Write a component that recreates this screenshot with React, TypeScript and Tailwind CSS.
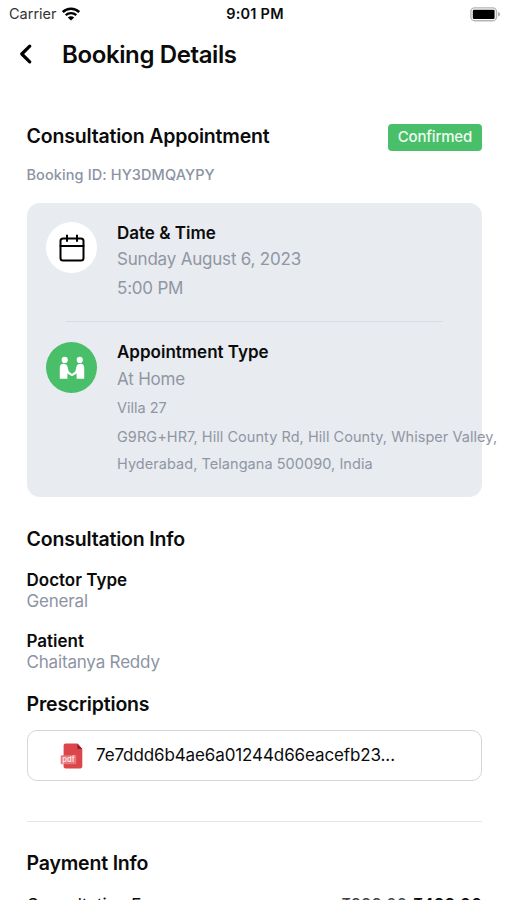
import type { ReactNode } from "react";

function WifiIcon() {
  return (
    <svg width="18" height="14" viewBox="0 0 18 14" fill="none" stroke="#000">
      <path d="M.8 5C5.300.5 12.700.5 17.200 5" strokeWidth="2.500" />
      <path d="M3.700 8.200c3-2.800 7.600-2.800 10.600 0" strokeWidth="2.300" />
      <path d="M9 13.600 5.800 10.400c1.800-1.600 4.600-1.600 6.400 0Z" fill="#000" stroke="none" />
    </svg>
  );
}

function BatteryIcon() {
  return (
    <svg width="31" height="15" viewBox="0 0 31 15">
      <rect x="0.900" y="0.900" width="25.600" height="12.800" rx="3.800" fill="#fff" stroke="#b5b5b5" strokeWidth="1.400" />
      <rect x="2.800" y="2.700" width="21.800" height="9.200" rx="1.200" fill="#000" />
      <path d="M28 5v4.600c1.700-.5 2.200-1.400 2.200-2.300S29.700 5.500 28 5Z" fill="#b5b5b5" />
    </svg>
  );
}

function CalendarIcon() {
  return (
    <svg width="26" height="28" viewBox="0 0 26 28" fill="none" stroke="#000" strokeWidth="2" strokeLinecap="round" strokeLinejoin="round">
      <rect x="1.500" y="4.500" width="23" height="22" rx="2.500" />
      <path d="M1.500 12h23M8 1.500v5.500M18 1.500v5.500" />
    </svg>
  );
}

function PeopleIcon() {
  return (
    <svg width="26" height="24" viewBox="0 0 26 24" fill="#fff">
      <circle cx="5.700" cy="3.900" r="3.100" />
      <circle cx="20.800" cy="3.900" r="3.100" />
      <path d="M.800 22.800V11.300c0-2.300 1.500-3.500 3.600-3.500 2.300 0 3.700 1 4.300 3.400l.900 4 3.400 2.800 3.400-2.800.9-4c.6-2.400 2-3.400 4.300-3.400 2.100 0 3.600 1.200 3.600 3.500v11.500h-7.600v-5.300l-3.200 2.100c-.9.600-1.900.6-2.800 0l-3.200-2.100v5.300Z" />
    </svg>
  );
}

function PdfIcon() {
  return (
    <svg width="24" height="26" viewBox="0 0 24 26">
      <path d="M5.500.5h11.800l5 5.600v17.500c0 1-.8 1.900-1.900 1.900H5.500c-1.100 0-1.900-.9-1.900-1.900V2.400C3.600 1.400 4.400.5 5.500.5Z" fill="#db464b" />
      <path d="M17.300.5l5 5.600h-3.700c-.8 0-1.300-.5-1.300-1.300Z" fill="#8f1f2b" />
      <rect x="0.700" y="12.200" width="15.600" height="9" rx="1.200" fill="#ea767b" />
      <text x="8.500" y="18.900" textAnchor="middle" fontSize="7.500" fontWeight="600" fill="#fbe6e7" fontFamily="Inter, sans-serif">
        pdf
      </text>
    </svg>
  );
}

type InfoFieldProps = {
  label: string;
  value: string;
};

function InfoField({ label, value }: InfoFieldProps) {
  return (
    <div className="text-[17px] leading-[21px]">
      <p className="font-semibold">{label}</p>
      <p className="tracking-[-0.18px] text-[#8c93a3]">{value}</p>
    </div>
  );
}

function SectionTitle({ children }: { children: ReactNode }) {
  return <h2 className="text-[19.500px] leading-6 font-semibold tracking-[-0.18px]">{children}</h2>;
}

export default function App() {
  return (
    <div className="h-[900px] w-full overflow-hidden bg-white font-['Inter',sans-serif] whitespace-nowrap text-[#0b0b0c]">
      <div className="grid h-7 grid-cols-3 items-center pr-[6px] pl-[9px] text-[14.500px]">
        <div className="flex items-center gap-[5px]">
          <span className="text-[#333]">Carrier</span>
          <WifiIcon />
        </div>
        <span className="text-center font-semibold tracking-[0.25px]">9:01 PM</span>
        <div className="flex justify-end">
          <BatteryIcon />
        </div>
      </div>

      <header className="flex h-[54px] items-center pl-[19px]">
        <svg width="14" height="20" viewBox="0 0 14 20" fill="none" stroke="#000" strokeWidth="3.200" strokeLinecap="round" strokeLinejoin="round" className="mb-[2px]">
          <path d="M10.700 2.200 2.800 10l7.900 7.800" />
        </svg>
        <h1 className="ml-[29px] text-[24px] font-semibold tracking-[-0.380px]">Booking Details</h1>
      </header>

      <main className="pr-[25px] pl-[26.500px]">
        <div className="flex items-start justify-between pt-[42px]">
          <SectionTitle>Consultation Appointment</SectionTitle>
          <span className="flex h-[27px] items-center rounded-[4px] bg-[#49bf69] px-[10px] text-[15px] font-medium tracking-[-0.2px] text-[#effbf2]">
            Confirmed
          </span>
        </div>
        <p className="mt-[14px] text-[14.500px] leading-5 font-medium tracking-[0.1px] text-[#8c93a3]">
          Booking ID: HY3DMQAYPY
        </p>

        <section className="mt-[18px] h-[294px] rounded-[13px] bg-[#e8ebf0] pt-[19px] pl-[19.500px]">
          <div className="flex gap-5">
            <div className="flex size-[51px] shrink-0 items-center justify-center rounded-full bg-white">
              <CalendarIcon />
            </div>
            <div className="pt-px text-[17px] text-[#9096a3]">
              <h3 className="leading-5 font-semibold text-[#0b0b0c]">Date &amp; Time</h3>
              <p className="mt-[2px] leading-[29px] tracking-[-0.2px]">Sunday August 6, 2023</p>
              <p className="leading-[29px] tracking-[-0.2px]">5:00 PM</p>
            </div>
          </div>
          <div className="mt-[18px] mr-[39px] ml-5 h-px bg-[#d9dce2]" />
          <div className="mt-5 flex gap-5">
            <div className="flex size-[51px] shrink-0 items-center justify-center rounded-full bg-[#49bf69]">
              <PeopleIcon />
            </div>
            <div className="text-[17px] text-[#9096a3]">
              <h3 className="leading-5 font-semibold text-[#0b0b0c]">Appointment Type</h3>
              <p className="mt-[3px] leading-[29px] tracking-[-0.2px]">At Home</p>
              <p className="text-[14.500px] leading-[28px]">Villa 27</p>
              <p className="mt-px text-[14.500px] leading-[27px] tracking-[0.050px]">
                G9RG+HR7, Hill County Rd, Hill County, Whisper Valley,
                <br />
                Hyderabad, Telangana 500090, India
              </p>
            </div>
          </div>
        </section>

        <section className="flex flex-col gap-[19px] pt-[30px]">
          <SectionTitle>Consultation Info</SectionTitle>
          <InfoField label="Doctor Type" value="General" />
          <InfoField label="Patient" value="Chaitanya Reddy" />
          <SectionTitle>Prescriptions</SectionTitle>
        </section>
        <div className="mt-[14px] flex h-[51px] items-center rounded-[10px] border border-[#d6d6d8] pl-[32.500px]">
          <PdfIcon />
          <span className="ml-3 pt-px text-[17px] tracking-[-0.11px]">7e7ddd6b4ae6a01244d66eacefb23...</span>
        </div>

        <div className="mt-[40px] h-px bg-[#e6e6e8]" />
        <section className="pt-[29px]">
          <SectionTitle>Payment Info</SectionTitle>
          <div className="mt-[18px] flex justify-between text-[17px] leading-6 tracking-[-0.1px]">
            <span>Consultation Fee</span>
            <span className="flex gap-[6px]">
              <span className="text-[#444]">₹999.00</span>
              <span className="font-semibold">₹499.00</span>
            </span>
          </div>
        </section>
      </main>
    </div>
  );
}
